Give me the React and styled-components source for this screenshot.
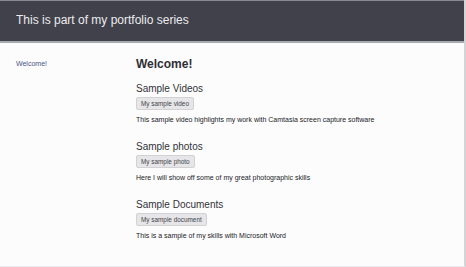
import React from "react";
import styled, { createGlobalStyle } from "styled-components";

const sections = [
  {
    title: "Sample Videos",
    button: "My sample video",
    text: "This sample video highlights my work with Camtasia screen capture software",
  },
  {
    title: "Sample photos",
    button: "My sample photo",
    text: "Here I will show off some of my great photographic skills",
  },
  {
    title: "Sample Documents",
    button: "My sample document",
    text: "This is a sample of my skills with Microsoft Word",
  },
];

const App = () => {
  return (
    <>
      <GlobalStyle />
      <Page>
        <Header>
          <h1>This is part of my portfolio series</h1>
        </Header>
        <Body>
          <Sidebar>
            <a href="#">Welcome!</a>
          </Sidebar>
          <Main>
            <h2>Welcome!</h2>
            {sections.map((section, index) => (
              <Section key={index}>
                <h3>{section.title}</h3>
                <SampleButton>{section.button}</SampleButton>
                <p>{section.text}</p>
              </Section>
            ))}
          </Main>
        </Body>
      </Page>
    </>
  );
};

export default App;

const GlobalStyle = createGlobalStyle`
  html, body {
    margin: 0;
    padding: 0;
    background: #fcfcfd;
  }
  body {
    font-family: "Liberation Sans", Arial, sans-serif;
  }
`;

const Page = styled.div`
  width: 466px;
  height: 267px;
  box-sizing: border-box;
  border-right: 2px solid #d4d4d6;
  border-bottom: 1px solid #ececee;
  background: #fcfcfd;
  overflow: hidden;
`;

const Header = styled.div`
  height: 43px;
  box-sizing: border-box;
  background: #40414b;
  border-top: 1px solid #8a8b92;
  border-bottom: 2px solid #a9aaae;
  display: flex;
  align-items: center;
  padding: 0 16px 2px;

  h1 {
    margin: 0;
    font-size: 12px;
    font-weight: normal;
    color: #ececee;
  }
`;

const Body = styled.div`
  display: grid;
  grid-template-columns: 120px 1fr;
  padding: 14px 0 0 16px;
`;

const Sidebar = styled.div`
  line-height: 7px;

  a {
    font-size: 7px;
    color: #4b5585;
    text-decoration: none;
  }
`;

const Main = styled.div`
  display: flex;
  flex-direction: column;

  h2 {
    margin: 0 0 12px;
    font-size: 12px;
    line-height: 14px;
    font-weight: bold;
    color: #2f2f33;
  }
`;

const Section = styled.div`
  display: flex;
  flex-direction: column;
  align-items: flex-start;
  margin-bottom: 17px;

  h3 {
    margin: 0 0 2px;
    font-size: 10px;
    line-height: 12px;
    font-weight: normal;
    color: #333338;
  }

  p {
    margin: 6px 0 0;
    font-size: 7px;
    line-height: 8px;
    color: #222226;
  }
`;

const SampleButton = styled.button`
  font-family: "Liberation Sans", Arial, sans-serif;
  font-size: 6.4px;
  color: #444448;
  background: #e6e6e8;
  border: 1px solid #d2d2d5;
  border-radius: 2px;
  padding: 0 4px;
  height: 13px;
  cursor: pointer;
`;
